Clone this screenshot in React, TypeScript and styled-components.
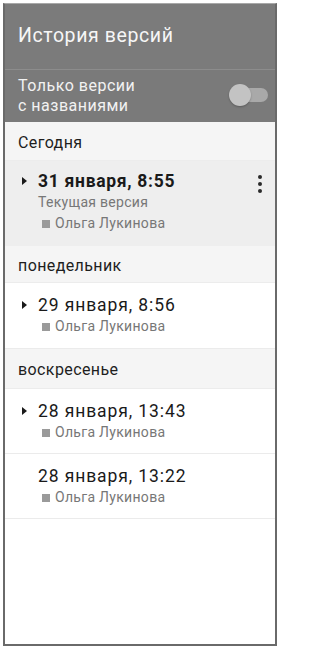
import React from "react";
import styled, { createGlobalStyle } from "styled-components";

const Global = createGlobalStyle`
  html, body { margin: 0; padding: 0; background: #fff; }
  body { font-family: Roboto, "Noto Sans", sans-serif; }
`;

const Frame = styled.div`
  margin: 3px 0 0 3px;
  width: 270px;
  height: 640px;
  border: 2px solid #6a6a6a;
  border-top: 1px solid #a8a8a8;
  display: flex;
  flex-direction: column;
  background: #fff;
  overflow: hidden;
`;

const Header = styled.div`
  background: #7b7b7b;
  height: 66px;
  box-sizing: border-box;
  padding: 20px 0 0 13px;
  color: #f6f6f6;
  font-size: 19.5px;
  letter-spacing: 0.6px;
  border-bottom: 1px solid #8c8c8c;
`;

const ToggleRow = styled.div`
  background: #7a7a7a;
  height: 52px;
  box-sizing: border-box;
  padding: 4px 7px 0 13px;
  display: flex;
  align-items: center;
  justify-content: space-between;
`;

const ToggleLabel = styled.div`
  color: #f2f2f2;
  font-size: 16px;
  line-height: 20px;
  letter-spacing: 0.5px;
  margin-top: -4px;
`;

const Switch = styled.div`
  position: relative;
  width: 39px;
  height: 22px;
  margin-top: -6px;
`;

const Track = styled.div`
  position: absolute;
  left: 11px;
  right: 0;
  top: 4px;
  height: 14px;
  border-radius: 7px;
  background: #a9a9a9;
`;

const Knob = styled.div`
  position: absolute;
  left: 0;
  top: 0;
  width: 22px;
  height: 22px;
  border-radius: 50%;
  background: #c3c3c3;
  box-shadow: 0 1px 2px rgba(0, 0, 0, 0.25);
`;

const Section = styled.div<{ $h: number }>`
  background: #f5f5f5;
  height: ${(p) => p.$h}px;
  box-sizing: border-box;
  padding: 2px 0 0 13px;
  display: flex;
  align-items: center;
  font-size: 16px;
  color: #1e1e1e;
  letter-spacing: 0.4px;
  border-bottom: 1px solid #ececec;
`;

const Item = styled.div<{ $selected?: boolean; $h: number }>`
  position: relative;
  height: ${(p) => p.$h}px;
  box-sizing: border-box;
  background: ${(p) => (p.$selected ? "#eeeeee" : "#ffffff")};
  padding: ${(p) => (p.$selected ? "10px" : "12px")} 0 0 33px;
  border-bottom: 1px solid ${(p) => (p.$selected ? "#eeeeee" : "#ebebeb")};
`;

const DateLine = styled.div<{ $bold?: boolean }>`
  position: relative;
  font-size: 17.5px;
  line-height: 20px;
  font-weight: ${(p) => (p.$bold ? 700 : 400)};
  color: #1a1a1a;
  letter-spacing: ${(p) => (p.$bold ? "0.7px" : "0.9px")};
`;

const Caret = styled.span`
  position: absolute;
  left: -16px;
  top: 6px;
  width: 0;
  height: 0;
  border-top: 4.5px solid transparent;
  border-bottom: 4.5px solid transparent;
  border-left: 5px solid #1a1a1a;
`;

const SubLine = styled.div`
  font-size: 14px;
  line-height: 20px;
  color: #777777;
  letter-spacing: 0.3px;
  margin-top: 1px;
  display: flex;
  align-items: center;
`;

const Swatch = styled.span`
  display: inline-block;
  width: 8px;
  height: 8px;
  background: #9a9a9a;
  margin: 1px 5px 0 4px;
`;

const Kebab = styled.div`
  position: absolute;
  right: 13px;
  top: 14px;
  display: flex;
  flex-direction: column;
  gap: 3px;
  & > span {
    width: 4px;
    height: 4px;
    border-radius: 50%;
    background: #2a2a2a;
  }
`;

const Filler = styled.div`
  flex: 1;
  background: #fff;
`;

const Author = () => (
  <SubLine>
    <Swatch />
    Ольга Лукинова
  </SubLine>
);

export default function App() {
  return (
    <>
      <Global />
      <Frame>
        <Header>История версий</Header>
        <ToggleRow>
          <ToggleLabel>
            Только версии
            <br />с названиями
          </ToggleLabel>
          <Switch>
            <Track />
            <Knob />
          </Switch>
        </ToggleRow>
        <Section $h={39}>Сегодня</Section>
        <Item $selected $h={85}>
          <DateLine $bold>
            <Caret />
            31 января, 8:55
          </DateLine>
          <SubLine>Текущая версия</SubLine>
          <Author />
          <Kebab>
            <span />
            <span />
            <span />
          </Kebab>
        </Item>
        <Section $h={37}>понедельник</Section>
        <Item $h={66}>
          <DateLine>
            <Caret />
            29 января, 8:56
          </DateLine>
          <Author />
        </Item>
        <Section $h={40}>воскресенье</Section>
        <Item $h={65}>
          <DateLine>
            <Caret />
            28 января, 13:43
          </DateLine>
          <Author />
        </Item>
        <Item $h={65}>
          <DateLine>28 января, 13:22</DateLine>
          <Author />
        </Item>
        <Filler />
      </Frame>
    </>
  );
}
